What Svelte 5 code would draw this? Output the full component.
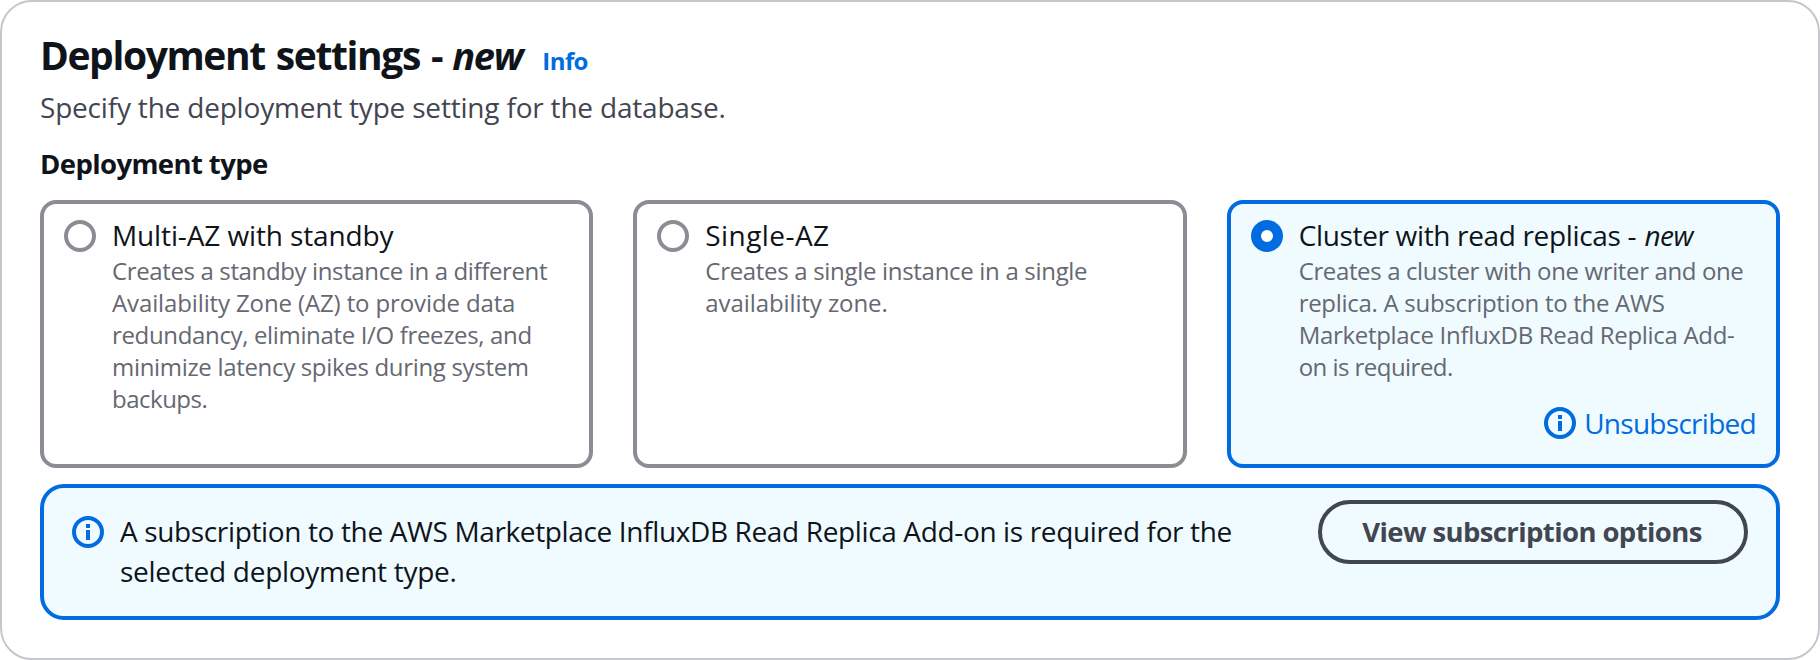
<script>
  // Each line carries its own tracking value in px.
  const options = [
    {
      title: 'Multi-AZ with standby',
      track: -0.12,
      lines: [
        ['Creates a standby instance in a different', -0.369],
        ['Availability Zone (AZ) to provide data', -0.124],
        ['redundancy, eliminate I/O freezes, and', -0.345],
        ['minimize latency spikes during system', -0.32],
        ['backups.', -0.5]
      ]
    },
    {
      title: 'Single-AZ',
      track: 0.425,
      lines: [
        ['Creates a single instance in a single', -0.31],
        ['availability zone.', -0.09]
      ]
    },
    {
      title: 'Cluster with read replicas -',
      track: -0.34,
      tag: 'new',
      status: 'Unsubscribed',
      lines: [
        ['Creates a cluster with one writer and one', -0.37],
        ['replica. A subscription to the AWS', -0.289],
        ['Marketplace InfluxDB Read Replica Add-', -0.31],
        ['on is required.', -0.538]
      ]
    }
  ];
  let selected = $state(2);
</script>

{#snippet infoIcon()}
  <svg class="icon" viewBox="0 0 32 32" aria-hidden="true">
    <circle cx="16" cy="16" r="14" fill="none" stroke="currentColor" stroke-width="4" />
    <path d="M14 8h4v4h-4zM14 14h4v10h-4z" fill="currentColor" />
  </svg>
{/snippet}

<section class="panel">
  <header>
    <h2><span>Deployment settings -</span> <em>new</em></h2>
    <a class="info" href="#info">Info</a>
  </header>
  <p class="description">Specify the deployment type setting for the database.</p>
  <h3>Deployment type</h3>

  <div class="tiles" role="radiogroup">
    {#each options as option, i}
      <div
        class="tile"
        class:selected={selected === i}
        role="radio"
        aria-checked={selected === i}
        tabindex="0"
        onclick={() => (selected = i)}
        onkeydown={(e) => e.key === ' ' && (selected = i)}
      >
        <span class="radio"></span>
        <div class="body">
          <div class="title">
            <span style:letter-spacing="{option.track}px">{option.title}</span>
            {#if option.tag}<em>{option.tag}</em>{/if}
          </div>
          <div class="text">
            {#each option.lines as [line, track]}
              <div style:letter-spacing="{track}px">{line}</div>
            {/each}
          </div>
          {#if option.status}
            <div class="status">{@render infoIcon()}<span>{option.status}</span></div>
          {/if}
        </div>
      </div>
    {/each}
  </div>

  <div class="alert">
    {@render infoIcon()}
    <p>
      <span class="first">A subscription to the AWS Marketplace InfluxDB Read Replica Add-on is required for the</span><br />
      <span class="second">selected deployment type.</span>
    </p>
    <button type="button">View subscription options</button>
  </div>
</section>

<style>
  :global(body) {
    background: #fff;
  }
  .panel {
    box-sizing: border-box;
    width: 1820px;
    height: 660px;
    padding: 28px 38px 38px;
    border: 2px solid #c6c6cd;
    border-radius: 32px;
    background: #fff;
    color: #0f141a;
    font: 28px/40px "Open Sans", "Noto Sans", sans-serif;
  }
  h2, h3, p {
    margin: 0;
  }
  header {
    display: flex;
    align-items: baseline;
    height: 57px;
  }
  h2 {
    display: flex;
    align-items: baseline;
    gap: 10px;
    font-size: 39px;
    line-height: 50px;
    letter-spacing: -1.4px;
    word-spacing: 2.4px;
  }
  h2 em {
    font-size: 38px;
    letter-spacing: -1.3px;
  }
  .info {
    margin-left: 20px;
    color: #006ce0;
    font-size: 24px;
    font-weight: 700;
    letter-spacing: -0.6px;
    text-decoration: none;
  }
  .description {
    color: #424650;
    letter-spacing: -0.195px;
  }
  h3 {
    margin: 17px 0 16px;
    font-size: 27.5px;
    line-height: 40px;
    letter-spacing: -0.6px;
  }
  .tiles {
    display: grid;
    grid-template-columns: repeat(3, 1fr);
    gap: 40px;
  }
  .tile {
    box-sizing: border-box;
    display: flex;
    gap: 16px;
    height: 268px;
    padding: 11px 20px 20px;
    border: 4px solid #8c8c94;
    border-radius: 16px;
  }
  .radio {
    flex: none;
    box-sizing: border-box;
    width: 32px;
    height: 32px;
    margin-top: 5px;
    border: 4px solid #8c8c94;
    border-radius: 50%;
    background: #fff;
  }
  .selected {
    border-color: #006ce0;
    background: #f0fbff;
  }
  .selected .radio {
    border: 10px solid #006ce0;
  }
  .body {
    flex: 1;
    display: flex;
    flex-direction: column;
    white-space: nowrap;
  }
  .title em {
    margin-left: 1px;
    letter-spacing: -0.5px;
  }
  .text {
    color: #656871;
    font-size: 24px;
    line-height: 32px;
  }
  .status {
    display: flex;
    justify-content: flex-end;
    align-items: center;
    gap: 8px;
    margin-top: 20px;
    color: #006ce0;
    letter-spacing: -0.72px;
  }
  .icon {
    flex: none;
    width: 32px;
    height: 32px;
  }
  .alert {
    box-sizing: border-box;
    display: flex;
    align-items: flex-start;
    gap: 16px;
    height: 136px;
    margin-top: 16px;
    padding: 12px 28px;
    border: 4px solid #006ce0;
    border-radius: 24px;
    background: #f0fbff;
  }
  .alert .icon {
    margin-top: 16px;
    color: #006ce0;
  }
  .alert p {
    flex: 1;
    margin-top: 11px;
    white-space: nowrap;
  }
  .first {
    letter-spacing: -0.361px;
  }
  .second {
    letter-spacing: -0.28px;
  }
  button {
    box-sizing: border-box;
    width: 430px;
    height: 64px;
    padding: 0 2px 0 0;
    border: 4px solid #424650;
    border-radius: 32px;
    background: transparent;
    color: #424650;
    font: 700 27.5px/40px "Open Sans", "Noto Sans", sans-serif;
    letter-spacing: -0.6px;
    white-space: nowrap;
  }
</style>
